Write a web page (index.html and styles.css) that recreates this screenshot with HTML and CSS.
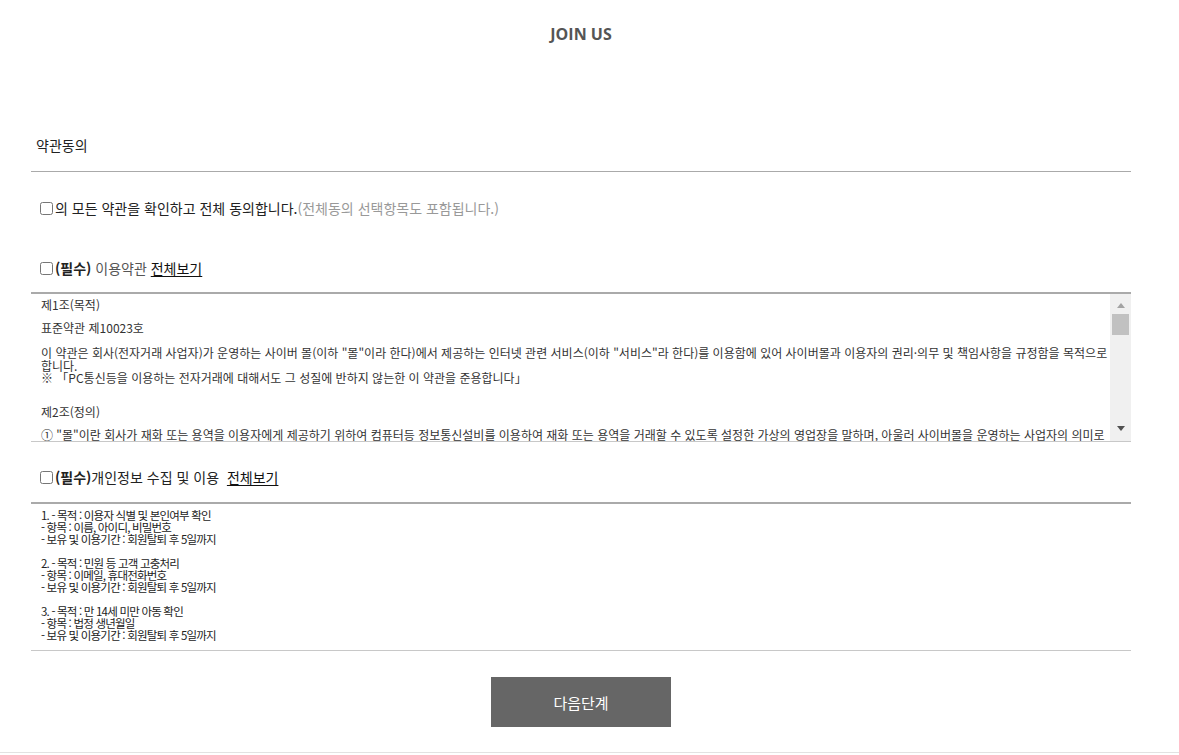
FILE: index.html
```html
<!DOCTYPE html>
<html lang="ko">
<head>
<meta charset="utf-8">
<title>JOIN US</title>
<link rel="stylesheet" href="styles.css">
</head>
<body>
<header class="page-title">JOIN US</header>
<main class="wrap">
  <h2 class="section-title">약관동의</h2>

  <label class="agree-all">
    <input type="checkbox" class="chk">
    <span>의 모든 약관을 확인하고 전체 동의합니다.</span><span class="note">(전체동의 선택항목도 포함됩니다.)</span>
  </label>

  <div class="agree-row first">
    <input type="checkbox" class="chk">
    <span class="req">(필수)</span>&nbsp;<span class="muted">이용약관</span>&nbsp;<a class="more" href="#">전체보기</a>
  </div>

  <div class="terms-box">
    <div class="terms-content">
      <p class="t-head">제1조(목적)</p>
      <p class="t-sub">표준약관 제10023호</p>
      <p class="t-p">이 약관은 회사(전자거래 사업자)가 운영하는 사이버 몰(이하 "몰"이라 한다)에서 제공하는 인터넷 관련 서비스(이하 "서비스"라 한다)를 이용함에 있어 사이버몰과 이용자의 권리·의무 및 책임사항을 규정함을 목적으로 합니다.<br>※ 「PC통신등을 이용하는 전자거래에 대해서도 그 성질에 반하지 않는한 이 약관을 준용합니다」</p>
      <p class="t-head">제2조(정의)</p>
      <p class="t-p">① "몰"이란 회사가 재화 또는 용역을 이용자에게 제공하기 위하여 컴퓨터등 정보통신설비를 이용하여 재화 또는 용역을 거래할 수 있도록 설정한 가상의 영업장을 말하며, 아울러 사이버몰을 운영하는 사업자의 의미로도 사용합니다.<br>② "이용자"란 "몰"에 접속하여 이 약관에 따라 "몰"이 제공하는 서비스를 받는 회원 및 비회원을 말합니다.</p>
    </div>
    <div class="scrollbar" aria-hidden="true">
      <span class="sb-btn up"><span class="arrow-up"></span></span>
      <span class="sb-track"><span class="sb-thumb"></span></span>
      <span class="sb-btn down"><span class="arrow-down"></span></span>
    </div>
  </div>

  <div class="agree-row second">
    <input type="checkbox" class="chk">
    <span class="req">(필수)</span><span>개인정보 수집 및 이용&nbsp;&nbsp;</span><a class="more" href="#">전체보기</a>
  </div>

  <div class="privacy-box">1. - 목적 : 이용자 식별 및 본인여부 확인
- 항목 : 이름, 아이디, 비밀번호
- 보유 및 이용기간 : 회원탈퇴 후 5일까지

2. - 목적 : 민원 등 고객 고충처리
- 항목 : 이메일, 휴대전화번호
- 보유 및 이용기간 : 회원탈퇴 후 5일까지

3. - 목적 : 만 14세 미만 아동 확인
- 항목 : 법정 생년월일
- 보유 및 이용기간 : 회원탈퇴 후 5일까지</div>

  <div class="actions">
    <button type="button" class="btn-next">다음단계</button>
  </div>
</main>
<footer class="page-footer"></footer>
</body>
</html>
```
FILE: styles.css
```css
* { box-sizing: border-box; }
html, body { margin: 0; padding: 0; background: #fff; }
body {
  font-family: "Noto Sans CJK KR", "Noto Sans", sans-serif;
  color: #222;
  font-size: 14px;
}
.page-title {
  height: 68px;
  line-height: 68px;
  width: 1100px;
  margin-left: 31px;
  text-align: center;
  font-family: "Open Sans", "Noto Sans CJK KR", sans-serif;
  font-weight: 700;
  font-size: 16px;
  color: #555;
}
.wrap {
  width: 1100px;
  margin-left: 31px;
}
.section-title {
  margin: 0;
  padding: 67px 0 16px 5px;
  line-height: 20px;
  font-size: 14px;
  font-weight: 400;
  color: #222;
  border-bottom: 1px solid #aaa;
}
.agree-all, .agree-row {
  display: flex;
  align-items: center;
  line-height: 20px;
  font-size: 14px;
  color: #222;
}
.agree-all { padding-top: 26px; }
.agree-row.first { padding: 40px 0 14px; }
.agree-row.second { padding: 25px 0 15px; }
.chk {
  width: 13px;
  height: 13px;
  margin: 0 2px 0 9px;
}
.note { color: #999; }
.req { font-weight: 700; }
.muted { color: #555; }
.more { color: #111; text-decoration: underline; text-underline-offset: 2px; }

.terms-box {
  display: flex;
  height: 150px;
  border-top: 2px solid #aaa;
  border-bottom: 1px solid #c8c8c8;
}
.terms-content {
  flex: 1;
  overflow: hidden;
  padding: 5px 0 0 10px;
  font-size: 12px;
  line-height: 12.5px;
  letter-spacing: 0;
  color: #333;
}
.terms-content p { margin: 0; }
.terms-content .t-head { margin-bottom: 10.5px; }
.terms-content .t-sub { margin-bottom: 12.5px; }
.terms-content .t-p { margin-bottom: 21.5px; }

.scrollbar {
  width: 21px;
  flex: none;
  display: flex;
  flex-direction: column;
  background: #f0f0f0;
}
.sb-btn {
  display: flex;
  justify-content: center;
  height: 20px;
}
.sb-btn.up { align-items: flex-start; padding-top: 9px; }
.sb-btn.down { align-items: flex-end; padding-bottom: 10px; }
.arrow-up {
  width: 0; height: 0;
  border-left: 4.5px solid transparent;
  border-right: 4.5px solid transparent;
  border-bottom: 5px solid #a3a3a3;
}
.arrow-down {
  width: 0; height: 0;
  border-left: 4.5px solid transparent;
  border-right: 4.5px solid transparent;
  border-top: 5px solid #505050;
}
.sb-track { flex: 1; display: block; padding: 0 2px; }
.sb-thumb { display: block; height: 21px; background: #c1c1c1; }

.privacy-box {
  height: 149px;
  border-top: 2px solid #aaa;
  border-bottom: 1px solid #c8c8c8;
  padding: 5px 10px;
  white-space: pre-line;
  font-size: 11.5px;
  line-height: 12px;
  letter-spacing: -0.8px;
  color: #222;
}
.actions {
  display: flex;
  justify-content: center;
  padding: 26px 0 25px;
}
.btn-next {
  width: 180px;
  height: 50px;
  border: 0;
  background: #666;
  color: #fff;
  font-family: "Noto Sans CJK KR", sans-serif;
  font-size: 15px;
  cursor: pointer;
}
.page-footer {
  border-top: 1px solid #e2e2e2;
  height: 10px;
}
```
